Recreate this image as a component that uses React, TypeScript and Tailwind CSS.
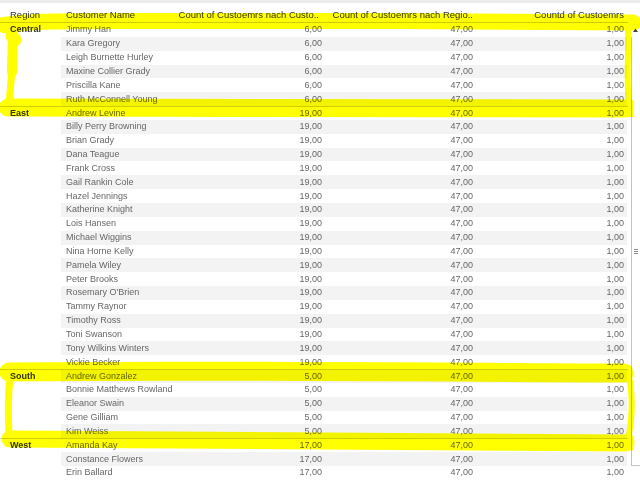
import React from "react";

type Group = { region: string; v: string; names: string[] };

const groups: Group[] = [
  {
    region: "Central",
    v: "6,00",
    names: ["Jimmy Han", "Kara Gregory", "Leigh Burnette Hurley", "Maxine Collier Grady", "Priscilla Kane", "Ruth McConnell Young"],
  },
  {
    region: "East",
    v: "19,00",
    names: [
      "Andrew Levine",
      "Billy Perry Browning",
      "Brian Grady",
      "Dana Teague",
      "Frank Cross",
      "Gail Rankin Cole",
      "Hazel Jennings",
      "Katherine Knight",
      "Lois Hansen",
      "Michael Wiggins",
      "Nina Horne Kelly",
      "Pamela Wiley",
      "Peter Brooks",
      "Rosemary O'Brien",
      "Tammy Raynor",
      "Timothy Ross",
      "Toni Swanson",
      "Tony Wilkins Winters",
      "Vickie Becker",
    ],
  },
  {
    region: "South",
    v: "5,00",
    names: ["Andrew Gonzalez", "Bonnie Matthews Rowland", "Eleanor Swain", "Gene Gilliam", "Kim Weiss"],
  },
  {
    region: "West",
    v: "17,00",
    names: ["Amanda Kay", "Constance Flowers", "Erin Ballard"],
  },
];

export default function App() {
  let idx = 0;
  const rows: React.ReactNode[] = [];
  groups.forEach((g, gi) => {
    g.names.forEach((n, i) => {
      const odd = idx % 2 === 1;
      rows.push(
        <div
          key={g.region + n}
          className={
            "flex h-[13.85px] items-center text-[9px] text-[#666] " +
            (i === 0 && gi > 0 ? "border-t border-[#cfcfcf]" : "")
          }
        >
          <div className="w-[61px] shrink-0 pl-[10px] font-bold text-[#333] leading-none">{i === 0 ? g.region : ""}</div>
          <div className={"flex h-full w-[566px] items-center leading-none " + (odd ? "bg-[#f3f3f3]" : "bg-white")}>
            <div className="w-[113px] shrink-0 whitespace-nowrap pl-[5px]">{n}</div>
            <div className="w-[150px] shrink-0 pr-[2px] text-right">{g.v}</div>
            <div className="w-[151px] shrink-0 pr-[2px] text-right">47,00</div>
            <div className="w-[152px] shrink-0 pr-[3px] text-right">1,00</div>
          </div>
        </div>
      );
      idx++;
    });
  });

  return (
    <div className="relative h-[483px] w-[640px] overflow-hidden bg-white font-['Liberation_Sans',Arial,sans-serif]">
      <div className="h-[3px] bg-[#ececec]" />
      <div className="flex">
        <div className="w-[628px] shrink-0">
          <div className="flex h-[20px] border-b border-[#cfcfcf] pt-[6px] text-[9.5px] leading-[12px] text-[#333]">
            <div className="w-[61px] shrink-0 pl-[10px]">Region</div>
            <div className="w-[113px] shrink-0 whitespace-nowrap pl-[5px]">Customer Name</div>
            <div className="w-[150px] shrink-0 whitespace-nowrap pr-[5px] text-right">Count of Custoemrs nach Custo..</div>
            <div className="w-[151px] shrink-0 whitespace-nowrap pr-[2px] text-right">Count of Custoemrs nach Regio..</div>
            <div className="w-[152px] shrink-0 whitespace-nowrap pr-[3px] text-right">Countd of Custoemrs</div>
          </div>
          {rows}
        </div>
        <div className="flex w-[12px] shrink-0 flex-col">
          <svg className="ml-[5px] mt-[25px]" width="5" height="4" viewBox="0 0 5 4">
            <path d="M0 4 L2.5 0.5 L5 4 Z" fill="#444" />
          </svg>
          <div className="ml-[3px] mt-[5px] flex h-[429px] w-[9px] items-center justify-center border-b border-l border-[#c3c3c3] bg-white">
            <div className="flex flex-col gap-[1px]">
              <div className="h-px w-[4px] bg-[#8a8a8a]" />
              <div className="h-px w-[4px] bg-[#8a8a8a]" />
              <div className="h-px w-[4px] bg-[#8a8a8a]" />
            </div>
          </div>
        </div>
      </div>

      <svg
        className="pointer-events-none absolute left-0 top-0 mix-blend-multiply"
        width="640"
        height="483"
        viewBox="0 0 640 483"
      >
        <g fill="none" stroke="#ffff00" strokeLinejoin="round">
          {/* Central box */}
          <path d="M4 25 C 30 21, 70 21, 120 21 L 400 21 C 500 21, 600 22, 633 22.5" strokeWidth="16" strokeLinecap="round" />
          <path d="M633 22.5 L 626 22.5" strokeWidth="15" />
          <path d="M13 30 C 13 45, 12 60, 12 72" strokeWidth="10" strokeLinecap="round" />
          <path d="M12 36 L 15 40" strokeWidth="13" strokeLinecap="round" />
          <path d="M12 70 C 11 82, 10 92, 9 104" strokeWidth="7" strokeLinecap="round" />
          <path d="M628 26 C 629 50, 626 80, 629 104" strokeWidth="6" strokeLinecap="round" />
          <path d="M8 107.5 C 100 106.5, 300 106.5, 625 108.5" strokeWidth="18" strokeLinecap="round" />
          <path d="M620 108.5 L 633 108.5" strokeWidth="17" />

          {/* South box */}
          <path d="M9 372 C 200 370, 400 372, 624 373" strokeWidth="19" strokeLinecap="round" />
          <path d="M620 373 L 630 373.5" strokeWidth="17" />
          <path d="M10 378 C 8 395, 8 415, 9 434" strokeWidth="7" strokeLinecap="round" />
          <path d="M627 368 C 633 390, 633 415, 628 440" strokeWidth="6" strokeLinecap="round" />
          <path d="M10 439 C 200 439, 400 442, 626 443" strokeWidth="17" strokeLinecap="round" />
          <path d="M620 443 L 633 443" strokeWidth="15" />
        </g>
      </svg>
    </div>
  );
}
